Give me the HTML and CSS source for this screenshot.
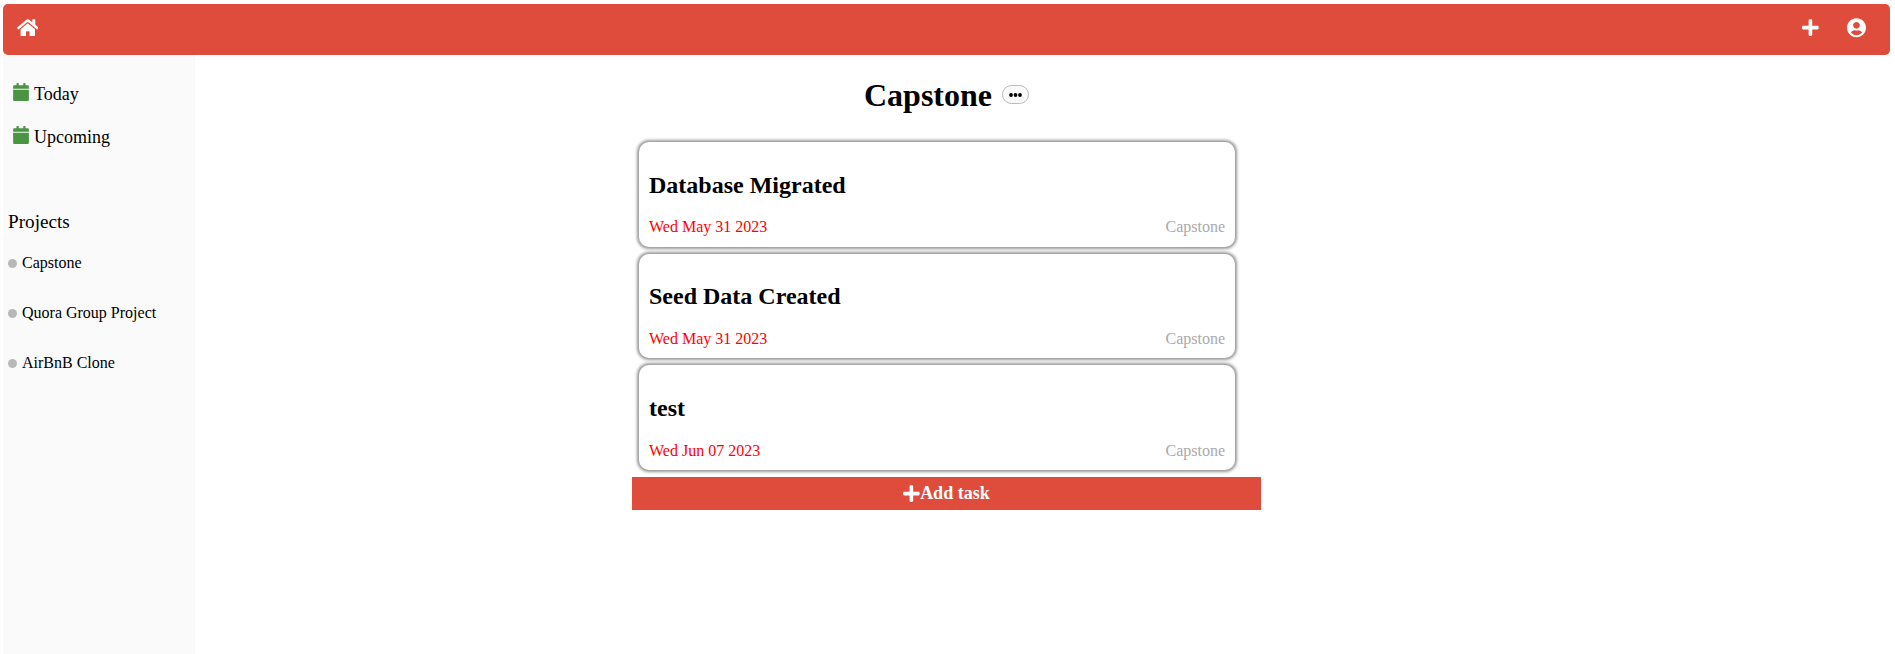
FILE: index.html
```html
<!DOCTYPE html>
<html lang="en">
<head>
<meta charset="utf-8">
<title>Capstone</title>
<link rel="stylesheet" href="styles.css">
</head>
<body>
<svg class="defs" width="0" height="0">
  <symbol id="plus" viewBox="0 0 448 512"><path d="M416 208H272V64c0-17.67-14.33-32-32-32h-32c-17.67 0-32 14.33-32 32v144H32c-17.67 0-32 14.33-32 32v32c0 17.67 14.33 32 32 32h144v144c0 17.67 14.33 32 32 32h32c17.67 0 32-14.33 32-32V304h144c17.67 0 32-14.33 32-32v-32c0-17.67-14.33-32-32-32z"/></symbol>
  <symbol id="calendar" viewBox="0 0 448 512"><path d="M0 192h448v284c0 20-16 36-36 36H36c-20 0-36-16-36-36V192zm448-32v-60c0-20-16-36-36-36h-60V16c0-9-7-16-16-16h-32c-9 0-16 7-16 16v48H160V16c0-9-7-16-16-16h-32c-9 0-16 7-16 16v48H36C16 64 0 80 0 100v60h448z"/></symbol>
</svg>
<header class="topbar">
  <svg class="home" viewBox="0 0 576 512"><path d="M280.37 148.26L96 300.11V464a16 16 0 0 0 16 16l112.06-.29a16 16 0 0 0 15.92-16V368a16 16 0 0 1 16-16h64a16 16 0 0 1 16 16v95.64a16 16 0 0 0 16 16.05L464 480a16 16 0 0 0 16-16V300L295.67 148.26a12.19 12.19 0 0 0-15.3 0zM571.6 251.47L488 182.56V44.05a12 12 0 0 0-12-12h-56a12 12 0 0 0-12 12v72.61L318.47 43a48 48 0 0 0-61 0L4.34 251.47a12 12 0 0 0-1.6 16.9l25.5 31A12 12 0 0 0 45.15 301l235.22-193.74a12.19 12.19 0 0 1 15.3 0L530.9 301a12 12 0 0 0 16.9-1.6l25.5-31a12 12 0 0 0-1.7-16.93z"/></svg>
  <div class="actions">
    <svg class="plus"><use href="#plus"/></svg>
    <svg class="user" viewBox="0 0 496 512"><path d="M248 8C111 8 0 119 0 256s111 248 248 248 248-111 248-248S385 8 248 8zm0 96c48.6 0 88 39.4 88 88s-39.4 88-88 88-88-39.4-88-88 39.4-88 88-88zm0 344c-58.7 0-111.3-26.6-146.5-68.2 18.8-35.4 55.6-59.8 98.5-59.8 2.4 0 4.8.4 7.1 1.1 13 4.2 26.6 6.9 40.9 6.9 14.3 0 28-2.7 40.9-6.9 2.3-.7 4.7-1.1 7.1-1.1 42.9 0 79.7 24.4 98.5 59.8C359.3 421.4 306.7 448 248 448z"/></svg>
  </div>
</header>
<div class="layout">
  <nav class="sidebar">
    <div class="nav-link"><svg class="calendar"><use href="#calendar"/></svg><span>Today</span></div>
    <div class="nav-link"><svg class="calendar"><use href="#calendar"/></svg><span>Upcoming</span></div>
    <div class="projects-title">Projects</div>
    <div class="project"><span class="dot"></span>Capstone</div>
    <div class="project"><span class="dot"></span>Quora Group Project</div>
    <div class="project"><span class="dot"></span>AirBnB Clone</div>
  </nav>
  <main class="main">
    <div class="heading">
      <h1>Capstone</h1>
      <button class="more"><svg class="dots" viewBox="0 0 13 4"><circle cx="2" cy="2" r="1.9"/><circle cx="6.5" cy="2" r="1.9"/><circle cx="11" cy="2" r="1.9"/></svg></button>
    </div>
    <div class="tasks">
      <section class="card"><h2>Database Migrated</h2><div class="meta"><span class="date">Wed May 31 2023</span><span>Capstone</span></div></section>
      <section class="card"><h2>Seed Data Created</h2><div class="meta"><span class="date">Wed May 31 2023</span><span>Capstone</span></div></section>
      <section class="card"><h2>test</h2><div class="meta"><span class="date">Wed Jun 07 2023</span><span>Capstone</span></div></section>
    </div>
    <button class="add"><svg class="plus"><use href="#plus"/></svg>Add task</button>
  </main>
</div>
</body>
</html>
```
FILE: styles.css
```css
* { box-sizing: border-box; }
body {
  margin: 0;
  padding: 4px 5px 0 3px;
  height: 654px;
  overflow: hidden;
  font-family: "Liberation Serif", "Times New Roman", serif;
  font-size: 16px;
  line-height: 18px;
  color: #000;
  background: #fff;
}
svg { display: block; fill: currentColor; flex: none; }
.defs { position: absolute; }
.topbar {
  height: 51px;
  padding: 14px 24px 0 13.5px;
  display: flex;
  justify-content: space-between;
  color: #fff;
  background: #df4c3c;
  border-radius: 5px;
}
.home { width: 21.6px; height: 19.2px; }
.plus { width: 16.8px; height: 19.2px; }
.actions { display: flex; gap: 28.4px; }
.user { width: 19px; height: 19.6px; }
.layout { display: flex; height: 599px; }
.sidebar {
  width: 192px;
  padding: 26px 5px 0;
  background: #fafafa;
}
.nav-link {
  display: flex;
  gap: 5px;
  height: 43px;
  padding-left: 5px;
  font-size: 18px;
  line-height: 26px;
}
.calendar { width: 16px; height: 18px; margin-top: 2px; color: #4a9444; }
.projects-title {
  margin-top: 43px;
  height: 44px;
  font-size: 19.2px;
  line-height: 24px;
}
.project {
  display: flex;
  align-items: center;
  gap: 5px;
  height: 18px;
  margin-bottom: 32px;
}
.dot { width: 9px; height: 9px; border-radius: 50%; background: #b8b8b8; }
.main {
  flex: 1;
  padding: 21px 0 0 437px;
}
.heading {
  display: flex;
  align-items: center;
  height: 37px;
  padding-left: 232px;
}
h1 { margin: 0; font-size: 32px; line-height: 38px; }
.more {
  width: 27px;
  height: 19px;
  margin-left: 10px;
  padding: 0;
  display: flex;
  align-items: center;
  justify-content: center;
  color: #000;
  background: #fafafa;
  border: 1px solid #bbb;
  border-radius: 10px;
}
.dots { width: 13px; height: 4px; }
.tasks {
  display: flex;
  flex-direction: column;
  gap: 7px;
  width: 596px;
  margin: 29px 0 0 7px;
}
.card {
  height: 104.6px;
  padding: 28.7px 10px 0;
  border-radius: 10px;
  box-shadow: 0 0 3px 2px #999;
}
h2 { margin: 0; font-size: 24px; line-height: 28px; }
.meta {
  display: flex;
  justify-content: space-between;
  margin-top: 19.7px;
  color: #a9a9a9;
}
.date { color: red; }
.add {
  width: 629px;
  height: 33px;
  margin-top: 7.2px;
  padding: 0;
  display: flex;
  align-items: center;
  justify-content: center;
  font: bold 18px "Liberation Serif", serif;
  color: #fff;
  background: #df4c3c;
  border: 0;
}
```
